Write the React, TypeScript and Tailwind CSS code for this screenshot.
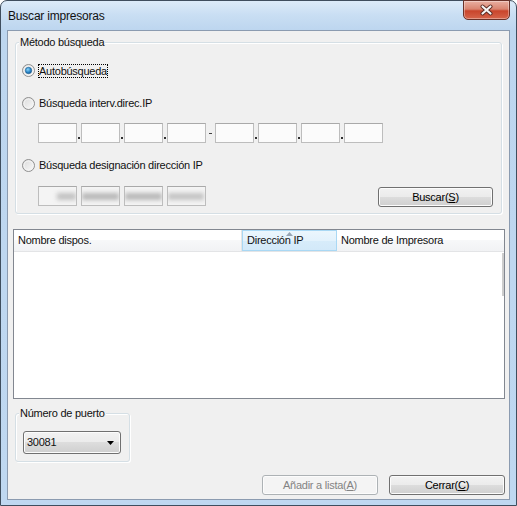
import React from "react";

const Radio: React.FC<{ checked?: boolean }> = ({ checked }) => (
  <svg width="13" height="13" viewBox="0 0 13 13" className="shrink-0">
    <defs>
      <linearGradient id={checked ? "rgOn" : "rgOff"} x1="0" y1="0" x2="1" y2="1">
        <stop offset="0" stopColor="#d9d9d9" />
        <stop offset="1" stopColor="#fbfbfb" />
      </linearGradient>
      <radialGradient id="dot" cx="0.4" cy="0.35" r="0.7">
        <stop offset="0" stopColor="#8ad6fb" />
        <stop offset="0.6" stopColor="#2b86c8" />
        <stop offset="1" stopColor="#12548f" />
      </radialGradient>
    </defs>
    <circle cx="6.5" cy="6.5" r="6" fill={`url(#${checked ? "rgOn" : "rgOff"})`} stroke="#8f8f8f" />
    <circle cx="6.5" cy="6.5" r="4.5" fill="none" stroke="#f4f4f4" />
    {checked && <circle cx="6.5" cy="6.5" r="3.2" fill="url(#dot)" stroke="#1b5f93" strokeWidth="0.6" />}
  </svg>
);

const IpBox: React.FC<{ disabled?: boolean; children?: React.ReactNode }> = ({ disabled, children }) => (
  <div
    className={`w-[39px] h-[20px] border border-[#bdbdbd] border-t-[#a9a9a9] flex items-center overflow-hidden ${
      disabled ? "bg-[#f4f4f4]" : "bg-[#fbfbfb]"
    }`}
  >
    {children}
  </div>
);

const Dot = () => (
  <div className="w-[4px] h-[20px] flex items-end justify-center pb-[4px]">
    <div className="w-[2px] h-[2px] bg-[#303030]" />
  </div>
);

const Btn: React.FC<{ children: React.ReactNode; disabled?: boolean; className?: string }> = ({ children, disabled, className }) => (
  <div
    className={`h-[20px] rounded-[3px] border flex items-center justify-center shadow-[inset_0_0_0_1px_#fcfcfc] ${
      disabled
        ? "border-[#adb2b5] bg-[#f4f4f4] text-[#838383]"
        : "border-[#707070] bg-[linear-gradient(180deg,#f2f2f2_0%,#ebebeb_50%,#dddddd_50%,#cfcfcf_100%)] text-black"
    } ${className ?? ""}`}
  >
    {children}
  </div>
);

const App: React.FC = () => {
  return (
    <div className="w-[517px] h-[506px] bg-white font-['Liberation_Sans',Arial,sans-serif] text-[11px] tracking-[-0.25px] leading-[13px] text-[#111]">
      <div className="w-full h-full rounded-t-[7px] border border-[#3f4e5e] bg-[linear-gradient(180deg,#dcebf9_0px,#c9def3_14px,#bdd6ef_29px,#bfd8f1_100%)] flex flex-col px-[6px] pb-[5px]">
        {/* Title bar */}
        <div className="h-[29px] flex justify-between shrink-0">
          <span className="self-center pl-[1px] text-[12px] tracking-[-0.2px] mt-[1px]">Buscar impresoras</span>
          <div className="self-start -mt-px w-[47px] h-[20px] rounded-b-[5px] border border-[#6a3229] bg-[linear-gradient(180deg,#e9b0a2_0%,#d98470_45%,#c9452c_55%,#d6654b_100%)] shadow-[inset_0_0_0_1px_rgba(255,255,255,0.35)] flex items-center justify-center">
            <svg width="15" height="12" viewBox="0 0 15 12">
              <path d="M3.5 2.5 L11.5 9.5 M11.5 2.5 L3.5 9.5" stroke="#5a2a22" strokeWidth="4" strokeLinecap="round" />
              <path d="M3.5 2.5 L11.5 9.5 M11.5 2.5 L3.5 9.5" stroke="#f6f6f6" strokeWidth="2.2" strokeLinecap="round" />
            </svg>
          </div>
        </div>

        {/* Client area */}
        <div className="flex-1 border border-[#8b9bb0] bg-[#f0f0f0] flex flex-col">
          {/* Método búsqueda */}
          <div className="relative mt-[11px] mx-[7px] rounded-[3px] border border-[#d5dfe5] shadow-[inset_1px_1px_0_#ffffff,1px_1px_0_#ffffff] flex flex-col pl-[6px] pr-[8px] pb-[7px]">
            <span className="absolute left-[3px] -top-[7px] px-[1px] bg-[#f0f0f0]">Método búsqueda</span>

            <div className="mt-[21px] h-[13px] flex items-center">
              <Radio checked />
              <span className="ml-[3px] border border-dotted border-black leading-[12px]">Autobúsqueda</span>
            </div>

            <div className="mt-[20px] h-[13px] flex items-center">
              <Radio />
              <span className="ml-[4px]">Búsqueda interv.direc.IP</span>
            </div>

            <div className="mt-[13px] h-[20px] flex pl-[16px]">
              <IpBox />
              <Dot />
              <IpBox />
              <Dot />
              <IpBox />
              <Dot />
              <IpBox />
              <div className="w-[9px] h-[20px] flex items-center justify-center">
                <div className="w-[3px] h-px bg-[#404040]" />
              </div>
              <IpBox />
              <Dot />
              <IpBox />
              <Dot />
              <IpBox />
              <Dot />
              <IpBox />
            </div>

            <div className="mt-[16px] h-[13px] flex items-center">
              <Radio />
              <span className="ml-[4px]">Búsqueda designación dirección IP</span>
            </div>

            <div className="mt-[14px] h-[20px] flex items-start pl-[16px]">
              <IpBox disabled>
                <div className="ml-[18px] w-[22px] h-[7px] bg-[#c2c2c2] blur-[2px]" />
              </IpBox>
              <div className="w-[4px]" />
              <IpBox disabled>
                <div className="w-[39px] h-[7px] bg-[#b8b8b8] blur-[2px]" />
              </IpBox>
              <div className="w-[4px]" />
              <IpBox disabled>
                <div className="w-[39px] h-[7px] bg-[#b8b8b8] blur-[2px]" />
              </IpBox>
              <div className="w-[4px]" />
              <IpBox disabled>
                <div className="w-[36px] h-[7px] bg-[#c4c4c4] blur-[2px]" />
              </IpBox>
              <Btn className="ml-auto mt-px w-[115px]">
                <span>
                  Buscar(<span className="underline">S</span>)
                </span>
              </Btn>
            </div>
          </div>

          {/* List view */}
          <div className="relative mt-[15px] ml-[5px] mr-[4px] h-[170px] border border-[#828790] bg-white flex flex-col">
            <div className="h-[22px] flex border-b border-[#e3e4e6] bg-[linear-gradient(180deg,#ffffff_0%,#ffffff_50%,#f7f8f9_50%,#f1f2f4_100%)]">
              <div className="w-[228px] pl-[4px] flex items-center border-r border-[#e5e5e5]">Nombre dispos.</div>
              <div className="relative w-[95px] pl-[4px] flex items-center border border-[#a9d8f4] bg-[linear-gradient(180deg,#ebf6fd_0%,#e3f2fc_50%,#d7ecfa_50%,#d3e9f9_100%)]">
                <svg width="7" height="4" viewBox="0 0 7 4" className="absolute left-[43px] top-[1px]">
                  <path d="M0 4 L3.5 0 L7 4 Z" fill="#97a5b4" />
                </svg>
                Dirección IP
              </div>
              <div className="flex-1 pl-[4px] flex items-center">Nombre de Impresora</div>
            </div>
            <div className="absolute right-0 top-[23px] w-[2px] h-[43px] bg-[#cdcdcd]" />
          </div>

          {/* Número de puerto */}
          <div className="relative mt-[14px] ml-[7px] w-[115px] rounded-[3px] border border-[#d5dfe5] shadow-[inset_1px_1px_0_#ffffff,1px_1px_0_#ffffff] pl-[7px] pt-[17px] pb-[7px]">
            <span className="absolute left-[3px] -top-[7px] px-[1px] bg-[#f0f0f0]">Número de puerto</span>
            <div className="w-[98px] h-[23px] rounded-[3px] border border-[#707070] bg-[linear-gradient(180deg,#f2f2f2_0%,#ebebeb_50%,#dddddd_50%,#cfcfcf_100%)] shadow-[inset_0_0_0_1px_#fcfcfc] flex items-center pl-[3px] pr-[6px]">
              <span className="flex-1">30081</span>
              <svg width="7" height="4" viewBox="0 0 7 4">
                <path d="M0 0 L7 0 L3.5 4 Z" fill="#000000" />
              </svg>
            </div>
          </div>

          {/* Bottom buttons */}
          <div className="mt-[13px] flex justify-end gap-[11px] mr-[4px]">
            <Btn disabled className="w-[116px]">
              <span>
                Añadir a lista(<span className="underline">A</span>)
              </span>
            </Btn>
            <Btn className="w-[116px]">
              <span>
                Cerrar(<span className="underline">C</span>)
              </span>
            </Btn>
          </div>
        </div>
      </div>
    </div>
  );
};

export default App;
